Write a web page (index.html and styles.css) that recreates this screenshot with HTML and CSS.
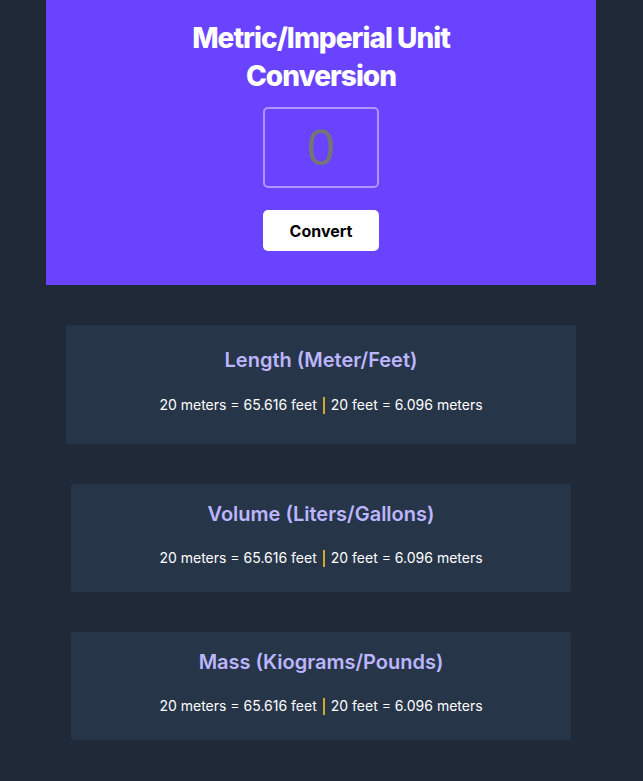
FILE: index.html
```html
<!DOCTYPE html>
<html lang="en">
<head>
<meta charset="utf-8">
<title>Metric/Imperial Unit Conversion</title>
<link rel="stylesheet" href="styles.css">
</head>
<body>
<main class="app">
  <header class="hero">
    <h1 class="hero-title">Metric/Imperial Unit<br>Conversion</h1>
    <input class="hero-input" type="number" placeholder="0">
    <button class="hero-btn" type="button">Convert</button>
  </header>
  <section class="results">
    <article class="card card-first">
      <h2 class="card-title">Length (Meter/Feet)</h2>
      <p class="card-text"><span>20 meters = 65.616 feet</span><span class="sep"></span><span>20 feet = 6.096 meters</span></p>
    </article>
    <article class="card">
      <h2 class="card-title">Volume (Liters/Gallons)</h2>
      <p class="card-text"><span>20 meters = 65.616 feet</span><span class="sep"></span><span>20 feet = 6.096 meters</span></p>
    </article>
    <article class="card">
      <h2 class="card-title">Mass (Kiograms/Pounds)</h2>
      <p class="card-text"><span>20 meters = 65.616 feet</span><span class="sep"></span><span>20 feet = 6.096 meters</span></p>
    </article>
  </section>
</main>
</body>
</html>
```
FILE: styles.css
```css
* { box-sizing: border-box; }
html, body { margin: 0; padding: 0; }
body {
  background: #1f2937;
  font-family: Inter, "Noto Sans", sans-serif;
  color: #fff;
  min-height: 781px;
  padding-right: 1px;
}
.app {
  width: 550px;
  margin: 0 auto;
}
.hero {
  background: #6943ff;
  display: flex;
  flex-direction: column;
  align-items: center;
  padding: 19px 0 34px;
}
.hero-title {
  margin: 0;
  font-size: 28px;
  font-weight: 800;
  line-height: 38px;
  letter-spacing: -0.035em;
  text-align: center;
  color: #fff;
}
.hero-input {
  margin-top: 12px;
  width: 116px;
  height: 81px;
  border: 2px solid rgba(255,255,255,0.45);
  border-radius: 5px;
  background: transparent;
  font-family: "Liberation Sans", Arial, sans-serif;
  font-size: 50px;
  text-align: center;
  color: #fff;
  outline: none;
  -moz-appearance: textfield;
}
.hero-input::placeholder { color: #757575; }
.hero-input::-webkit-outer-spin-button,
.hero-input::-webkit-inner-spin-button { -webkit-appearance: none; margin: 0; }
.hero-btn {
  margin-top: 22px;
  width: 116px;
  height: 41px;
  border: none;
  border-radius: 5px;
  background: #fff;
  color: #000;
  font-family: Inter, sans-serif;
  font-size: 16px;
  font-weight: 700;
}
.results {
  display: flex;
  flex-direction: column;
  gap: 40px;
  padding-top: 40px;
}
.card {
  margin: 0 25px;
  background: #273549;
  border-radius: 3px;
  padding: 18px 10px 24px;
  display: flex;
  flex-direction: column;
  align-items: center;
  gap: 22px;
}
.card-first {
  margin: 0 20px;
  padding: 23px 15px 29px;
  gap: 23px;
}
.card-title {
  margin: 0;
  font-size: 20px;
  font-weight: 600;
  line-height: 24px;
  color: #bcb6ff;
}
.card-text {
  margin: 0;
  font-size: 14px;
  line-height: 20px;
  display: flex;
  align-items: center;
  gap: 6px;
}
.sep {
  display: inline-block;
  width: 2px;
  height: 17px;
  background: #d9a728;
}
```
